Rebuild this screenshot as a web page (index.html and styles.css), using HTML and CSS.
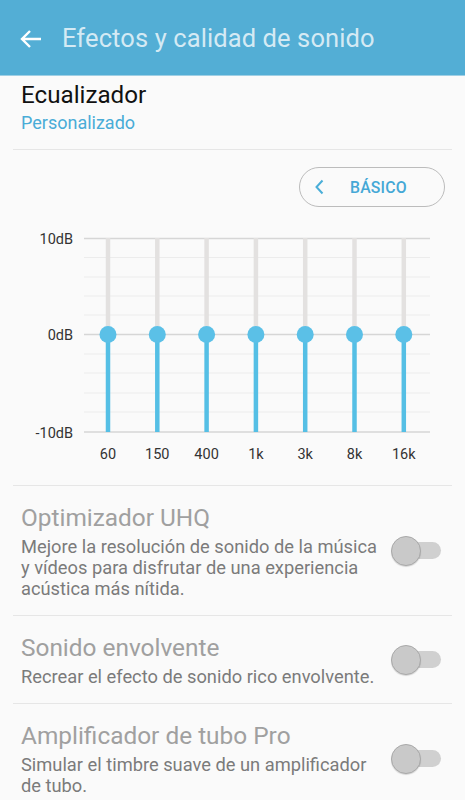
FILE: index.html
```html
<!DOCTYPE html>
<html>
<head>
	<meta charset="utf-8">
	<title>Efectos y calidad de sonido</title>
	<link rel="stylesheet" href="styles.css">
</head>
<body>
<div class="appbar">
	<svg class="back" width="22" height="20" viewBox="0 0 22 20"><path d="M21 10H2M10 2L2 10l8 8" fill="none" stroke="#fff" stroke-width="2.4"/></svg>
	<h1>Efectos y calidad de sonido</h1>
</div>

<div class="eq-head">
	<h2>Ecualizador</h2>
	<p>Personalizado</p>
</div>
<div class="line"></div>

<div class="btn-row">
	<a class="btn" href="javascript:;">
		<svg width="9" height="16" viewBox="0 0 9 16"><path d="M7.5 1.5L1.5 8l6 6.5" fill="none" stroke="#4aaed8" stroke-width="2"/></svg>
		<span>BÁSICO</span>
	</a>
</div>

<svg class="chart" width="465" height="278" viewBox="0 207 465 278">
	<g stroke="#ececec" stroke-width="1">
		<line x1="84" y1="257.5" x2="430" y2="257.5"/>
		<line x1="84" y1="277" x2="430" y2="277"/>
		<line x1="84" y1="296" x2="430" y2="296"/>
		<line x1="84" y1="315" x2="430" y2="315"/>
		<line x1="84" y1="354" x2="430" y2="354"/>
		<line x1="84" y1="373" x2="430" y2="373"/>
		<line x1="84" y1="393" x2="430" y2="393"/>
		<line x1="84" y1="412" x2="430" y2="412"/>
	</g>
	<g stroke="#d6d6d6" stroke-width="1.6">
		<line x1="84" y1="238.5" x2="430" y2="238.5"/>
		<line x1="84" y1="334.5" x2="430" y2="334.5"/>
		<line x1="84" y1="432" x2="430" y2="432"/>
	</g>
	<g class="db">
		<text x="73" y="244">10dB</text>
		<text x="73" y="340">0dB</text>
		<text x="73" y="438">-10dB</text>
	</g>
	<g id="bars"></g>
</svg>
<div class="line"></div>

<div class="item">
	<div class="text">
		<h3>Optimizador UHQ</h3>
		<p>Mejore la resolución de sonido de la música y vídeos para disfrutar de una experiencia acústica más nítida.</p>
	</div>
	<div class="switch"><i></i></div>
</div>
<div class="line"></div>

<div class="item">
	<div class="text">
		<h3>Sonido envolvente</h3>
		<p>Recrear el efecto de sonido rico envolvente.</p>
	</div>
	<div class="switch"><i></i></div>
</div>
<div class="line"></div>

<div class="item">
	<div class="text">
		<h3>Amplificador de tubo Pro</h3>
		<p>Simular el timbre suave de un amplificador de tubo.</p>
	</div>
	<div class="switch"><i></i></div>
</div>

<script type="text/javascript">
	var freqs = ["60","150","400","1k","3k","8k","16k"];
	var bars = document.getElementById("bars");
	var html = "";
	for(var i=0;i<freqs.length;i++){
		var x = 108 + i*49.3;
		html += '<line x1="'+x+'" y1="238" x2="'+x+'" y2="334" stroke="#e3e1e0" stroke-width="4.5"/>';
		html += '<line x1="'+x+'" y1="334" x2="'+x+'" y2="432" stroke="#55bfe5" stroke-width="4.5"/>';
		html += '<circle cx="'+x+'" cy="334.5" r="8.5" fill="#5bc0e7"/>';
		html += '<text class="hz" x="'+x+'" y="459">'+freqs[i]+'</text>';
	}
	bars.innerHTML = html;
</script>
</body>
</html>
```

FILE: styles.css
```css
html,body{margin:0;padding:0;}
body{width:465px;background:#fafafa;font-family:Roboto,"Noto Sans",sans-serif;color:#000;}
h1,h2,h3,p{margin:0;padding:0;font-weight:normal;}

.appbar{height:76px;background:#53aed5;display:flex;align-items:center;padding-left:20px;border-bottom:1px solid #9fcfe4;box-sizing:border-box;}
.appbar .back{display:block;margin-top:2px;}
.appbar h1{margin-left:20px;font-size:25.5px;color:rgba(255,255,255,0.76);letter-spacing:0.1px;}

.eq-head{padding:5px 21px 0;height:73px;box-sizing:border-box;}
.eq-head h2{font-size:24.2px;line-height:28px;color:#111;}
.eq-head p{font-size:18px;line-height:22px;margin-top:3px;color:#49acd7;}

.line{height:1px;background:#e6e6e6;margin:0 13px;}

.btn-row{display:flex;justify-content:flex-end;padding:17px 20px 0 0;}
.btn{display:flex;align-items:center;width:146px;height:40px;box-sizing:border-box;border:1.3px solid #bcbcbc;border-radius:20px;text-decoration:none;padding-left:15px;}
.btn svg{display:block;}
.btn span{margin-left:26px;font-size:15.8px;font-weight:500;color:#45a8d6;letter-spacing:0.2px;}

.chart{display:block;}
.chart text{font-family:Roboto,"Noto Sans",sans-serif;fill:#333;}
.chart .db text{font-size:14.5px;text-anchor:end;}
.chart .hz{font-size:14.5px;text-anchor:middle;}

.item{display:flex;align-items:center;padding:17px 24px 16px 21px;}
.item .text{flex:1;}
.item h3{font-size:24.4px;line-height:30px;color:#a0a0a0;}
.item p{font-size:18.3px;line-height:21px;margin-top:3px;color:#7b7b7b;max-width:358px;}

.switch{position:relative;width:50px;height:30px;margin-left:12px;}
.switch:before{content:"";position:absolute;left:9px;right:0;top:6px;height:17px;border-radius:9px;background:#d0d0d0;}
.switch i{position:absolute;left:0;top:0;width:28px;height:28px;border-radius:50%;background:#c9c9c9;border:1px solid #a9a9a9;box-shadow:0 1px 1px rgba(0,0,0,0.15);}
```
